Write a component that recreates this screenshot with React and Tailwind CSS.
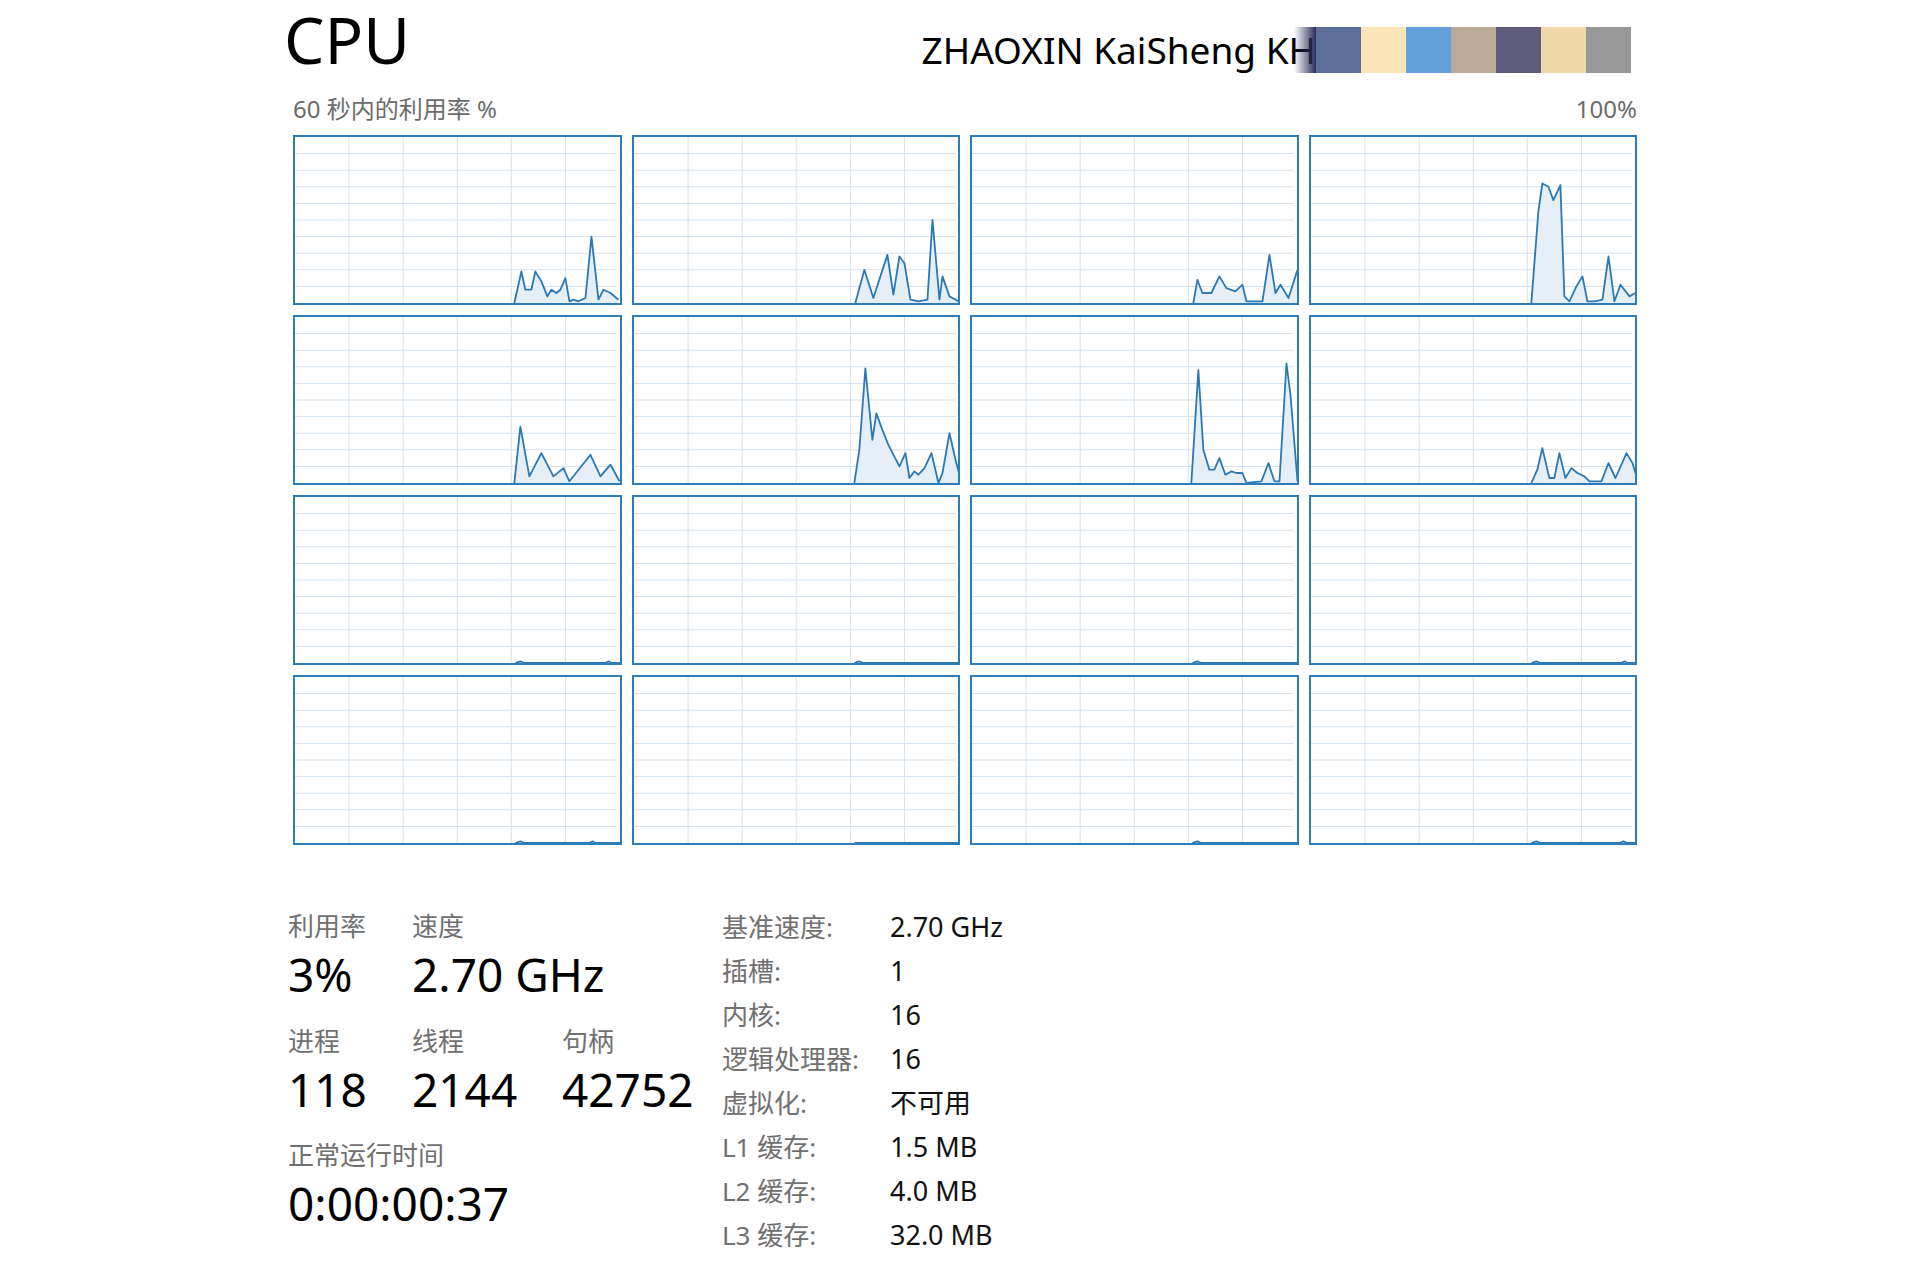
const GRID_V = [1, 2, 3, 4, 5];
const GRID_H = [1, 2, 3, 4, 5, 6, 7, 8, 9];

// [x in px across the 328px cell, % utilisation]
const cores = [
  [[221,0],[228,19],[232,8],[238,8],[242,19],[248,13],[254,4],[258,8],[263,6],[267,8],[272,15],[276,1],[280,2],[285,1],[292,3],[298,40],[305,2],[310,8],[317,6],[325,2]],
  [[223,0],[232,20],[241,3],[255,29],[261,5],[267,28],[272,24],[278,2],[286,1],[295,2],[300,50],[307,2],[310,16],[317,4],[326,1]],
  [[223,0],[227,14],[232,6],[241,6],[249,16],[256,9],[265,7],[272,11],[276,1],[292,1],[299,29],[305,6],[310,11],[318,3],[327,20]],
  [[222,0],[229,55],[233,72],[239,70],[244,62],[251,71],[255,4],[260,1],[267,10],[273,16],[278,1],[285,1],[293,2],[299,28],[305,1],[311,11],[320,4],[326,6]],
  [[221,0],[227,34],[236,4],[248,18],[260,4],[270,9],[276,1],[297,17],[307,4],[317,11],[326,1]],
  [[222,0],[227,20],[233,69],[240,26],[244,42],[250,32],[256,23],[267,10],[273,18],[277,3],[282,7],[286,5],[292,9],[299,18],[306,0],[310,6],[317,30],[323,14],[327,5]],
  [[221,0],[228,68],[233,20],[239,8],[244,8],[249,15],[255,5],[261,7],[266,6],[272,6],[276,0],[291,1],[298,12],[304,1],[309,1],[316,72],[320,53],[327,1]],
  [[222,0],[228,8],[233,21],[240,3],[245,3],[250,18],[256,3],[262,9],[268,6],[275,4],[280,1],[292,1],[299,12],[306,3],[317,18],[323,12],[327,4]],
  [[222,0],[227,1],[231,0],[312,0],[315,1],[318,0],[327,0]],
  [[222,0],[227,1],[231,0],[327,0]],
  [[222,0],[227,1],[231,0],[327,0]],
  [[222,0],[227,1],[231,0],[312,0],[315,1],[318,0],[327,0]],
  [[222,0],[227,1],[231,0],[296,0],[299,1],[302,0],[327,0]],
  [[222,0],[327,0]],
  [[222,0],[227,1],[231,0],[327,0]],
  [[222,0],[227,1],[231,0],[310,0],[314,1],[318,0],[327,0]],
];

const swatches = ["#5b6f9a", "#fce5b6", "#64a0dc", "#bca998", "#5f5c7e", "#f0d8a8", "#989898"];

const specs = [
  ["基准速度:", "2.70 GHz"],
  ["插槽:", "1"],
  ["内核:", "16"],
  ["逻辑处理器:", "16"],
  ["虚拟化:", "不可用"],
  ["L1 缓存:", "1.5 MB"],
  ["L2 缓存:", "4.0 MB"],
  ["L3 缓存:", "32.0 MB"],
];

function CoreGraph({ data }) {
  const h = 166;
  const pts = data.map(([x, p]) => [x - 2, +(h - (p / 100) * h).toFixed(1)]);
  const line = pts.map((p) => p.join(",")).join(" ");
  const area = `${pts[0][0]},${h} ${line} ${pts[pts.length - 1][0]},${h}`;
  return (
    <div className="h-[170px] border-2 border-[#2f7db8] bg-white">
      <svg viewBox="0 0 324 166" preserveAspectRatio="none" className="block h-full w-full">
        {GRID_V.map((i) => (
          <line key={"v" + i} x1={i * 54} x2={i * 54} y1={0} y2={h} stroke="#d3e2ee" strokeWidth="1" />
        ))}
        {GRID_H.map((i) => (
          <line key={"h" + i} x1={0} x2={321} y1={i * 16.6} y2={i * 16.6} stroke="#d3e2ee" strokeWidth="1" />
        ))}
        <polygon points={area} fill="#e6eff8" />
        <polyline points={line} fill="none" stroke="#2b78b4" strokeWidth="1.8" strokeLinejoin="round" />
      </svg>
    </div>
  );
}

function Stat({ label, value, className = "" }) {
  return (
    <div className={className}>
      <div className="text-[26px] leading-[30px] text-[#707070]">{label}</div>
      <div className="mt-[7px] text-[46px] leading-[52px] text-black">{value}</div>
    </div>
  );
}

export default function App() {
  return (
    <div className="min-h-screen bg-white font-['Noto_Sans','Noto_Sans_CJK_SC',sans-serif]">
      <div className="ml-[293px] w-[1344px] pt-[2px]">
        <div className="flex items-start justify-between">
          <div className="-ml-[9px] text-[64px] leading-[76px] text-black">CPU</div>
          <div className="mr-[6px] mt-[25px] flex h-[46px] items-center">
            <div className="text-[37px] leading-[46px] text-black">ZHAOXIN KaiSheng KH</div>
            <div className="-ml-[22px] h-full w-[22px] bg-gradient-to-r from-transparent to-[#2a2d5a]" />
            {swatches.map((c) => (
              <div key={c} className="h-full w-[45px]" style={{ backgroundColor: c }} />
            ))}
          </div>
        </div>

        <div className="mt-[16px] flex justify-between text-[24px] leading-[30px] text-[#6b6b6b]">
          <span>60 秒内的利用率 %</span>
          <span>100%</span>
        </div>

        <div className="mt-[11px] grid grid-cols-4 gap-[10px]">
          {cores.map((d, i) => (
            <CoreGraph key={i} data={d} />
          ))}
        </div>

        <div className="-ml-[5px] mt-[56px] flex">
          <div className="w-[434px] pt-[10px]">
            <div className="flex">
              <Stat className="w-[124px]" label="利用率" value="3%" />
              <Stat label="速度" value="2.70 GHz" />
            </div>
            <div className="mt-[26px] flex">
              <Stat className="w-[124px]" label="进程" value="118" />
              <Stat className="w-[150px]" label="线程" value="2144" />
              <Stat label="句柄" value="42752" />
            </div>
            <Stat className="mt-[25px]" label="正常运行时间" value="0:00:00:37" />
          </div>
          <div className="flex flex-col pt-[4px]">
            {specs.map(([k, v]) => (
              <div key={k} className="flex h-[44px] items-center">
                <div className="w-[168px] text-[26px] leading-[44px] text-[#707070]">{k}</div>
                <div className="text-[27px] leading-[44px] text-[#111]">{v}</div>
              </div>
            ))}
          </div>
        </div>
      </div>
    </div>
  );
}
